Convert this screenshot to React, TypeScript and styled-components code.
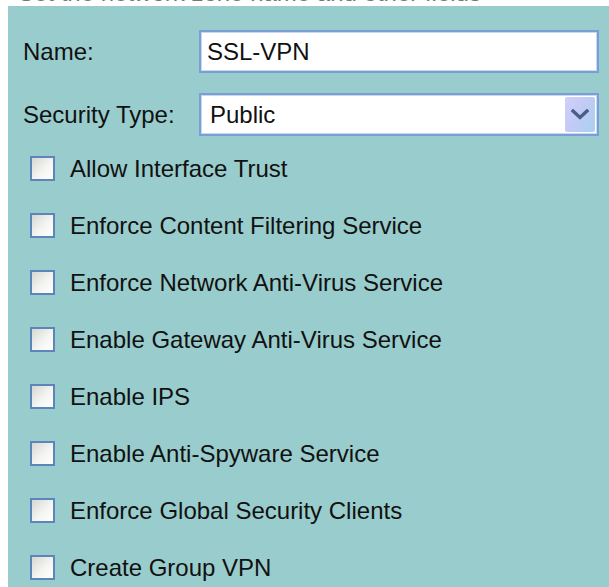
import styled, { createGlobalStyle } from 'styled-components'

const GlobalStyle = createGlobalStyle`
  body {
    margin: 0;
    background: #ffffff;
    font-family: "Liberation Sans", Arial, sans-serif;
    color: #111;
  }
`

const options = [
  'Allow Interface Trust',
  'Enforce Content Filtering Service',
  'Enforce Network Anti-Virus Service',
  'Enable Gateway Anti-Virus Service',
  'Enable IPS',
  'Enable Anti-Spyware Service',
  'Enforce Global Security Clients',
  'Create Group VPN',
]

const ChevronDown = () => (
  <svg width="18" height="11" viewBox="0 0 18 11">
    <path d="M2 2 L9 8.5 L16 2" fill="none" stroke="#4a5f88" strokeWidth="3.4" strokeLinecap="square" />
  </svg>
)

export default function App() {
  return <Page>
    <GlobalStyle />
    <TitleClip>
      <TitleText>Set the network zone name and other fields</TitleText>
    </TitleClip>

    <Panel>
      <FieldRow>
        <Label>Name:</Label>
        <TextBox defaultValue="SSL-VPN" />
      </FieldRow>

      <FieldRow>
        <Label>Security Type:</Label>
        <SelectBox>
          <SelectValue>Public</SelectValue>
          <DropButton>
            <ChevronDown />
          </DropButton>
        </SelectBox>
      </FieldRow>

      <CheckList>
        {options.map(text => (
          <CheckRow key={text}>
            <CheckBox />
            <CheckLabel>{text}</CheckLabel>
          </CheckRow>
        ))}
      </CheckList>
    </Panel>
  </Page>
}

const Page = styled.div`
  width: 609px;
  height: 587px;
  overflow: hidden;
`

// only the bottom edge of the heading shows above the panel
const TitleClip = styled.div`
  height: 6px;
  overflow: hidden;
  padding-left: 18px;
`

const TitleText = styled.div`
  margin-top: -19px;
  font-size: 24px;
  line-height: 24px;
  color: #777;
  white-space: nowrap;
`

const Panel = styled.div`
  margin-left: 8px;
  height: 581px;
  background: #99cccc;
  padding: 24px 10px 0 15px;
  box-sizing: border-box;
`

const FieldRow = styled.div`
  display: grid;
  grid-template-columns: 176px 1fr;
  align-items: center;
  height: 43px;
  margin-bottom: 20px;
`

const Label = styled.span`
  font-size: 24px;
`

const TextBox = styled.input`
  height: 43px;
  box-sizing: border-box;
  border: 2px solid #7b9fd4;
  box-shadow: inset 0 0 0 1px #c9d8f0;
  padding: 0 6px;
  font-family: "Liberation Sans", Arial, sans-serif;
  font-size: 24px;
  color: #111;
  background: #fff;
  outline: none;
`

const SelectBox = styled.div`
  height: 43px;
  box-sizing: border-box;
  border: 2px solid #7b9fd4;
  box-shadow: inset 0 0 0 1px #c9d8f0;
  background: #fff;
  display: flex;
  align-items: center;
  padding: 2px 2px 2px 9px;
`

const SelectValue = styled.span`
  flex: 1;
  font-size: 24px;
`

const DropButton = styled.div`
  width: 30px;
  height: 100%;
  border-radius: 2px;
  background: linear-gradient(120deg, #d3d0f8 0%, #c2cbf6 45%, #a9d0ef 100%);
  display: flex;
  align-items: center;
  justify-content: center;
`

const CheckList = styled.div`
  display: flex;
  flex-direction: column;
  gap: 32px;
  margin-top: 5px;
  padding-left: 7px;
`

const CheckRow = styled.label`
  display: flex;
  align-items: center;
  gap: 15px;
  height: 25px;
`

const CheckBox = styled.span`
  width: 25px;
  height: 25px;
  box-sizing: border-box;
  border: 2px solid #5c85bc;
  background: linear-gradient(135deg, #d6d6d2 0%, #f4f4f2 55%, #ffffff 100%);
  flex-shrink: 0;
`

const CheckLabel = styled.span`
  font-size: 24px;
`
